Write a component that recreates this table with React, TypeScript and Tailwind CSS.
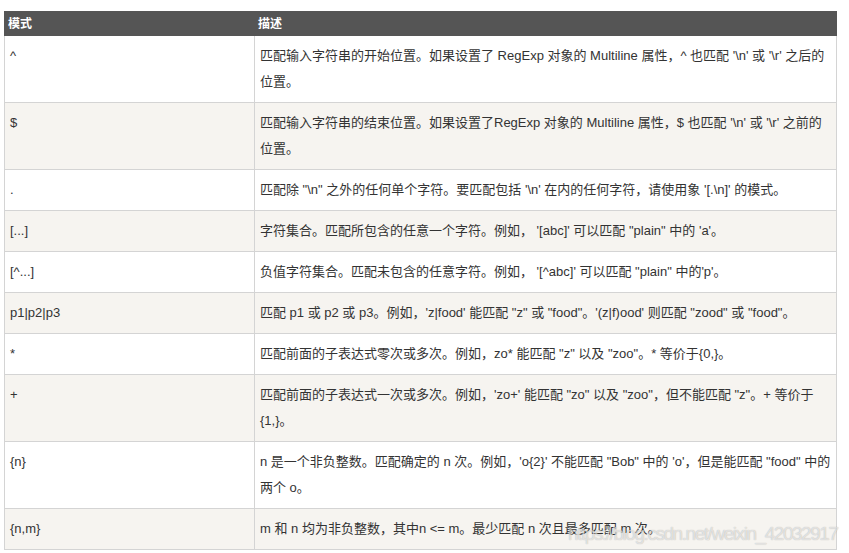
import React from "react";

const rows: [string, string][] = [
  ["^", "匹配输入字符串的开始位置。如果设置了 RegExp 对象的 Multiline 属性，^ 也匹配 '\\n' 或 '\\r' 之后的位置。"],
  ["$", "匹配输入字符串的结束位置。如果设置了RegExp 对象的 Multiline 属性，$ 也匹配 '\\n' 或 '\\r' 之前的位置。"],
  [".", "匹配除 \"\\n\" 之外的任何单个字符。要匹配包括 '\\n' 在内的任何字符，请使用象 '[.\\n]' 的模式。"],
  ["[...]", "字符集合。匹配所包含的任意一个字符。例如， '[abc]' 可以匹配 \"plain\" 中的 'a'。"],
  ["[^...]", "负值字符集合。匹配未包含的任意字符。例如， '[^abc]' 可以匹配 \"plain\" 中的'p'。"],
  ["p1|p2|p3", "匹配 p1 或 p2 或 p3。例如，'z|food' 能匹配 \"z\" 或 \"food\"。'(z|f)ood' 则匹配 \"zood\" 或 \"food\"。"],
  ["*", "匹配前面的子表达式零次或多次。例如，zo* 能匹配 \"z\" 以及 \"zoo\"。* 等价于{0,}。"],
  ["+", "匹配前面的子表达式一次或多次。例如，'zo+' 能匹配 \"zo\" 以及 \"zoo\"，但不能匹配 \"z\"。+ 等价于 {1,}。"],
  ["{n}", "n 是一个非负整数。匹配确定的 n 次。例如，'o{2}' 不能匹配 \"Bob\" 中的 'o'，但是能匹配 \"food\" 中的两个 o。"],
  ["{n,m}", "m 和 n 均为非负整数，其中n <= m。最少匹配 n 次且最多匹配 m 次。"],
];

export default function App() {
  return (
    <div className="relative min-h-[553px] w-[849px] overflow-hidden bg-white pt-[11px] pl-[4px] font-['Liberation_Sans','Noto_Sans_CJK_SC',sans-serif] text-[#333]">
      <table className="w-[833px] table-fixed border-collapse">
        <colgroup>
          <col className="w-[250px]" />
          <col />
        </colgroup>
        <thead>
          <tr>
            <th className="border border-[#555] bg-[#555] px-[3px] pt-[3px] pb-[2px] text-left align-top text-[12px] leading-[18px] font-bold text-white">
              模式
            </th>
            <th className="border border-[#555] bg-[#555] px-[3px] pt-[3px] pb-[2px] text-left align-top text-[12px] leading-[18px] font-bold text-white">
              描述
            </th>
          </tr>
        </thead>
        <tbody>
          {rows.map(([pattern, desc], i) => (
            <tr key={i} className={i % 2 === 0 ? "bg-white" : "bg-[#f6f4f0]"}>
              <td className="border border-[#d4d4d4] px-[5px] py-[7px] align-top text-[13px] leading-[26px]">
                {pattern}
              </td>
              <td className="border border-[#d4d4d4] px-[5px] py-[7px] align-top text-[13px] leading-[26px]">
                {desc}
              </td>
            </tr>
          ))}
        </tbody>
      </table>
      <div className="pointer-events-none absolute top-[522px] left-[568px] text-[19px] leading-[24px] tracking-[-1.45px] whitespace-nowrap text-white/60 [text-shadow:0_0_1px_rgba(0,0,0,0.3)]">
        https://blog.csdn.net/weixin_42032917
      </div>
    </div>
  );
}
